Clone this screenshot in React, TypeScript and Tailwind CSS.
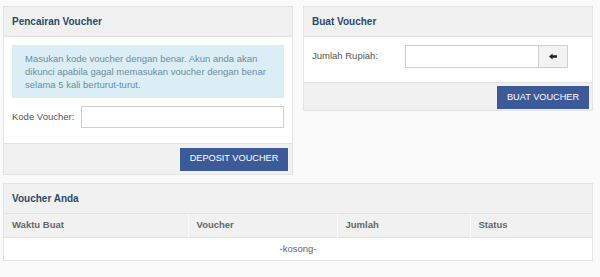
import React from "react";

const font = { fontFamily: '"Liberation Sans", Arial, sans-serif' };

const Panel: React.FC<{ title: string; className?: string; children: React.ReactNode }> = ({ title, className, children }) => (
  <div className={`border border-[#e3e3e3] bg-white ${className ?? ""}`}>
    <div className="h-[30px] bg-[#f1f1f1] border-b border-[#e3e3e3] flex items-center px-[8px]">
      <h3 className="text-[10px] font-bold text-[#2b4a6b]">{title}</h3>
    </div>
    {children}
  </div>
);

const App: React.FC = () => {
  return (
    <div className="w-[600px] h-[277px] bg-[#fafafa] pt-[6px] pl-[3px] text-[#555]" style={font}>
      <div className="flex gap-[10px] items-start">
        <Panel title="Pencairan Voucher" className="w-[290px]">
          <div className="px-[8px] pt-[8px] pb-[15px]">
            <div className="bg-[#dbedf5] text-[#6b8ea0] text-[9.5px] leading-[13px] pl-[13px] pr-[10px] pt-[7px] pb-[7px]">
              Masukan kode voucher dengan benar. Akun anda akan dikunci apabila gagal memasukan voucher dengan benar selama 5 kali berturut-turut.
            </div>
            <div className="flex items-center mt-[8px]">
              <label className="w-[69px] shrink-0 whitespace-nowrap text-[9.5px] text-[#555]">Kode Voucher:</label>
              <input className="flex-1 min-w-0 h-[22px] border border-[#cfcfcf] bg-white outline-none" />
            </div>
          </div>
          <div className="bg-[#f1f1f1] border-t border-[#e3e3e3] h-[31px] flex items-center justify-end pr-[4px]">
            <button className="h-[23px] w-[108px] bg-[#3c5a98] text-white text-[9.2px]">DEPOSIT VOUCHER</button>
          </div>
        </Panel>

        <Panel title="Buat Voucher" className="w-[290px]">
          <div className="px-[8px] pt-[8px] pb-[14px] flex items-center">
            <label className="w-[93px] shrink-0 whitespace-nowrap text-[9.5px] text-[#555]">Jumlah Rupiah:</label>
            <div className="flex">
              <input className="w-[134px] h-[23px] border border-[#cfcfcf] bg-white outline-none" />
              <button className="w-[29px] h-[23px] border border-l-0 border-[#cfcfcf] bg-[#f3f3f3] flex items-center justify-center">
                <svg width="8" height="7" viewBox="0 0 9 7">
                  <path d="M0 3.5 L4 0 L4 2 L9 2 L9 5 L4 5 L4 7 Z" fill="#222" />
                </svg>
              </button>
            </div>
          </div>
          <div className="bg-[#f1f1f1] border-t border-[#e3e3e3] h-[28px] flex items-start justify-end pt-[3px] pr-[3px]">
            <button className="h-[23px] w-[92px] bg-[#3c5a98] text-white text-[9.2px]">BUAT VOUCHER</button>
          </div>
        </Panel>
      </div>

      <Panel title="Voucher Anda" className="w-[590px] mt-[8px]">
        <table className="w-full border-collapse text-[9.5px]">
          <thead>
            <tr className="bg-[#f1f1f1] h-[23px] text-left text-[#666]">
              <th className="w-[184px] px-[8px] font-bold border-r border-[#fafafa]">Waktu Buat</th>
              <th className="w-[149px] px-[8px] font-bold border-r border-[#fafafa]">Voucher</th>
              <th className="w-[133px] px-[8px] font-bold border-r border-[#fafafa]">Jumlah</th>
              <th className="px-[8px] font-bold">Status</th>
            </tr>
          </thead>
          <tbody>
            <tr className="h-[23px] border-t border-[#e3e3e3]">
              <td colSpan={4} className="text-center text-[#666]">-kosong-</td>
            </tr>
          </tbody>
        </table>
      </Panel>
    </div>
  );
};

export default App;
